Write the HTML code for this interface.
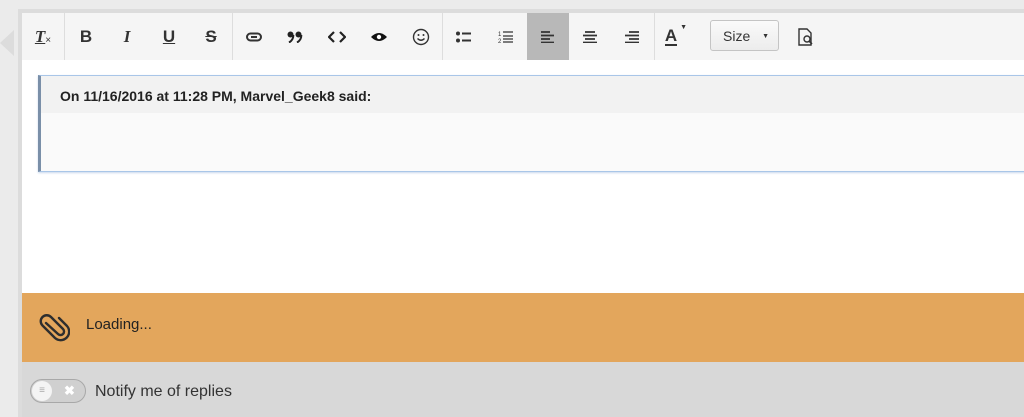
<!DOCTYPE html>
<html><head><style>
body{margin:0;width:1024px;height:417px;background:#ebebeb;position:relative;overflow:hidden;font-family:"Liberation Sans",sans-serif}
.a{position:absolute}
.btn{position:absolute;top:13px;height:47px;width:42px;display:flex;align-items:center;justify-content:center;font-size:17px;color:#333}
.sep{position:absolute;top:13px;height:47px;width:1px;background:#ddd}
</style></head><body>
<div class="a" style="left:18px;top:9px;width:1006px;height:4px;background:#dcdcdc"></div>
<div class="a" style="left:0;top:30px;width:0;height:0;border-top:13px solid transparent;border-bottom:13px solid transparent;border-right:14px solid #dcdcdc"></div>
<div class="a" style="left:18px;top:13px;width:4px;height:404px;background:#dcdcdc"></div>
<div class="a" style="left:22px;top:13px;width:1002px;height:47px;background:#f5f5f5"></div>
<div class="a" style="left:527px;top:13px;width:42px;height:47px;background:#b8b8b8"></div>
<div class="sep" style="left:64px"></div><div class="sep" style="left:232px"></div><div class="sep" style="left:442px"></div><div class="sep" style="left:654px"></div>
<div class="btn" style="left:22px"><span style="font-style:italic;font-weight:bold;text-decoration:underline;font-family:'Liberation Serif'">T</span><span style="font-size:10px;margin-top:8px">×</span></div>
<div class="btn" style="left:65px;font-weight:bold">B</div>
<div class="btn" style="left:106px;font-style:italic;font-family:'Liberation Serif';font-weight:bold">I</div>
<div class="btn" style="left:148px;text-decoration:underline;font-weight:bold">U</div>
<div class="btn" style="left:190px;text-decoration:line-through;font-weight:bold">S</div>
<div class="btn" style="left:233px"><svg width="16" height="10"><rect x="1" y="1.5" width="14" height="7" rx="3.5" fill="none" stroke="#333" stroke-width="2"/><line x1="5" y1="5" x2="11" y2="5" stroke="#333" stroke-width="2"/></svg></div>
<div class="btn" style="left:274px"><svg width="16" height="12"><circle cx="3.5" cy="3.5" r="3" fill="#222"/><path d="M6.3 4Q6.5 9 2 11.5" fill="none" stroke="#222" stroke-width="2"/><circle cx="11.5" cy="3.5" r="3" fill="#222"/><path d="M14.3 4Q14.5 9 10 11.5" fill="none" stroke="#222" stroke-width="2"/></svg></div>
<div class="btn" style="left:316px"><svg width="18" height="12"><path d="M6 1L1 6l5 5M12 1l5 5-5 5" fill="none" stroke="#222" stroke-width="2.2"/></svg></div>
<div class="btn" style="left:358px"><svg width="18" height="12"><path d="M1 6Q9-2 17 6Q9 14 1 6Z" fill="#111"/><circle cx="9" cy="6" r="2.2" fill="#fff"/></svg></div>
<div class="btn" style="left:400px"><svg width="18" height="18"><circle cx="9" cy="9" r="7.5" fill="none" stroke="#333" stroke-width="1.4"/><circle cx="6.5" cy="7" r="1" fill="#333"/><circle cx="11.5" cy="7" r="1" fill="#333"/><path d="M5.5 10.5Q9 14 12.5 10.5" fill="none" stroke="#333" stroke-width="1.4"/></svg></div>
<div class="btn" style="left:443px"><svg width="16" height="12"><circle cx="2" cy="2.5" r="2" fill="#333"/><circle cx="2" cy="9.5" r="2" fill="#333"/><path d="M6 2.5h9M6 9.5h9" stroke="#333" stroke-width="2"/></svg></div>
<div class="btn" style="left:485px"><svg width="16" height="14"><text x="0" y="6" font-size="6" fill="#333">1</text><text x="0" y="13" font-size="6" fill="#333">2</text><path d="M5 2h10M5 6h10M5 9h10M5 12h10" stroke="#333" stroke-width="1.2"/></svg></div>
<div class="btn" style="left:527px"><svg width="14" height="12"><path d="M0 1h9M0 4.5h13M0 8h9M0 11.5h13" stroke="#333" stroke-width="1.8"/></svg></div>
<div class="btn" style="left:569px"><svg width="14" height="12"><path d="M2 1h10M0 4.5h14M2 8h10M0 11.5h14" stroke="#333" stroke-width="1.8"/></svg></div>
<div class="btn" style="left:611px"><svg width="14" height="12"><path d="M4 1h10M0 4.5h14M4 8h10M0 11.5h14" stroke="#333" stroke-width="1.8"/></svg></div>
<div class="btn" style="left:655px"><span style="font-weight:bold;border-bottom:2px solid #333;line-height:16px">A</span><span style="font-size:7px;margin-top:-18px;margin-left:3px">▼</span></div>
<div class="a" style="left:710px;top:20px;width:69px;height:31px;border:1px solid #c4c4c4;border-radius:3px;background:linear-gradient(#fafafa,#ececec);font-size:14px;color:#333;line-height:31px;padding-left:12px;box-sizing:border-box">Size<span style="font-size:7px;position:absolute;right:9px">▼</span></div>
<div class="btn" style="left:785px"><svg width="16" height="18"><path d="M1 1h8l4 4v12H1Z" fill="none" stroke="#333" stroke-width="1.4"/><circle cx="9" cy="11" r="3" fill="none" stroke="#333" stroke-width="1.4"/><path d="M11 13l3 3" stroke="#333" stroke-width="1.6"/></svg></div>
<div class="a" style="left:22px;top:60px;width:1002px;height:233px;background:#fff"></div>
<div class="a" style="left:38px;top:75px;width:990px;height:97px;border:1px solid #a9c6e8;border-left:3px solid #7a8fa8;box-sizing:border-box;background:#fafafa;box-shadow:0 1px 2px #c8d8ec"></div>
<div class="a" style="left:41px;top:76px;width:983px;height:37px;background:#f2f2f2"></div>
<div class="a" style="left:60px;top:88px;font-size:14px;font-weight:bold;color:#222">On 11/16/2016 at 11:28 PM, Marvel_Geek8 said:</div>
<div class="a" style="left:22px;top:293px;width:1002px;height:69px;background:#e3a65c"></div>
<svg class="a" style="left:36px;top:311px" width="34" height="34"><path d="M22 10L11 22a3.5 3.5 0 0 0 5 5L28 15a6 6 0 0 0-8.5-8.5L7 19a8.5 8.5 0 0 0 12 12l8-8" fill="none" stroke="#2e2e2e" stroke-width="2.4" stroke-linecap="round" transform="rotate(-90 17 17)"/></svg>
<div class="a" style="left:86px;top:316px;font-size:15px;color:#222">Loading...</div>
<div class="a" style="left:22px;top:362px;width:1002px;height:55px;background:#d8d8d8"></div>
<div class="a" style="left:30px;top:379px;width:56px;height:24px;border-radius:12px;background:#d0d0d0;border:1px solid #a8a8a8;box-sizing:border-box"></div>
<div class="a" style="left:32px;top:381px;width:20px;height:20px;border-radius:10px;background:#f4f4f4;text-align:center;font-size:10px;line-height:20px;color:#aaa">≡</div>
<div class="a" style="left:64px;top:381px;font-size:13px;color:#fff;font-weight:bold;line-height:20px">✖</div>
<div class="a" style="left:95px;top:383px;font-size:16px;color:#333">Notify me of replies</div>
</body></html>
